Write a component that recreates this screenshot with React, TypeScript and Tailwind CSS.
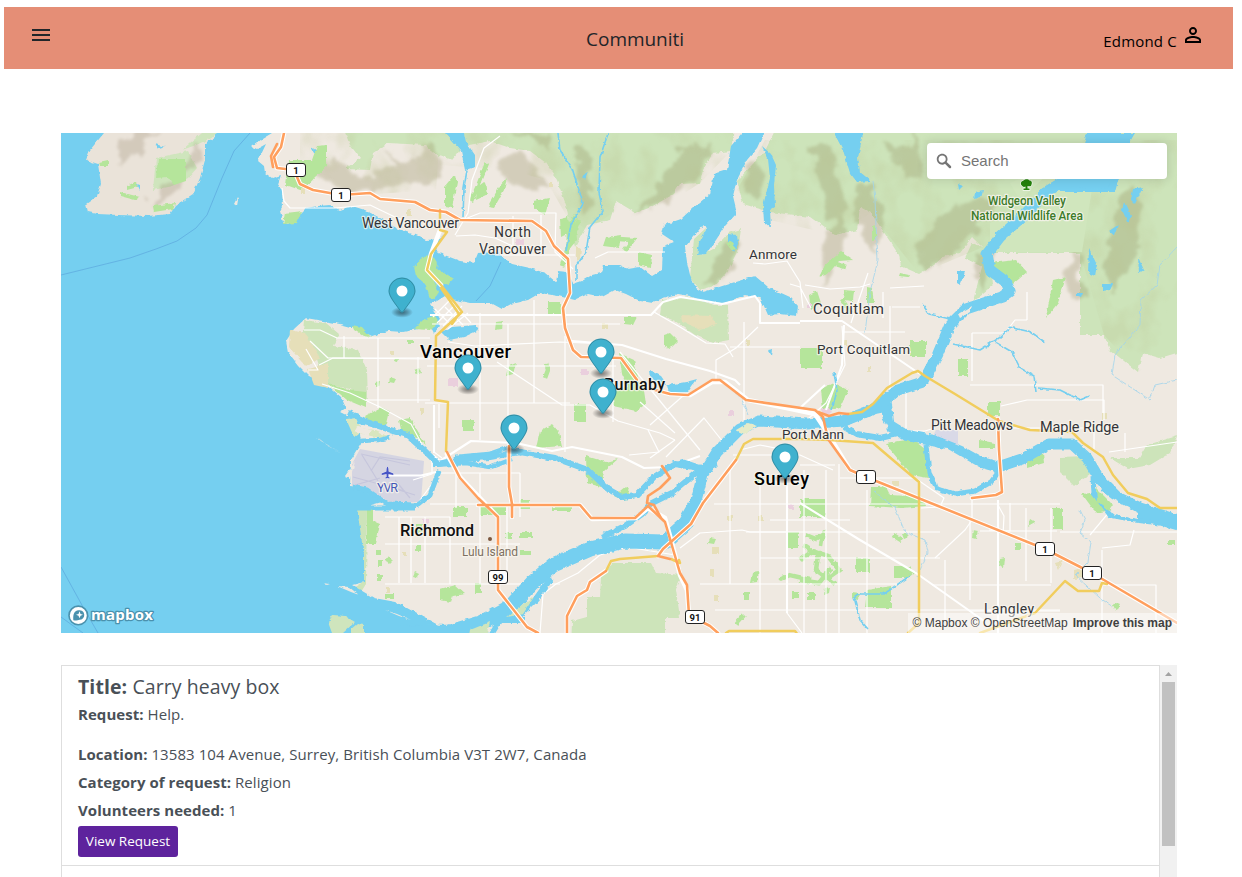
import React from "react";
import { MdMenu, MdPersonOutline } from "react-icons/md";

const coast =
  "M50 120H272V133L262 139 252 147 257 149 266 144 258 161 264 166 265 173 272 178 281 175 278 184 282 191 283 205 280 211 283 222 288 224 298 216 306 208 318 206 330 205 340 210 352 206 365 210 382 219 398 229 415 235 426 240 440 239 444 233 437 246 436 252 447 256 460 261 474 263 478 253 497 252 512 264 530 268 545 273 556 282 558 271 567 272 573 284 582 281 592 275 600 273 604 265 620 265 628 269 640 267 652 276 662 270 663 246 674 242 662 234 664 225 681 219 693 208 710 194 714 174 727 170 731 146 742 133V120H770L764 133 757 148 747 160 737 180 733 196 737 213 725 226 716 240 706 254 697 255 699 243 707 228 703 225 690 241 685 247 687 262 690 275 696 288 703 292 716 288 735 282 755 276 768 287 790 297 798 306 797 316 780 314 768 315 760 297 745 295 725 303 705 302 690 296 678 294 663 298 652 303 640 301 626 294 615 290 602 297 588 294 575 300 558 296 540 293 528 300 511 304 502 309 491 303 470 303 455 300 445 296 437 301 430 304 435 311 440 320 431 320 418 329 403 332 388 331 372 336 355 328 340 324 323 321 306 318 294 329 286 341 288 352 298 365 309 376 326 384 341 397 346 408 340 412 352 418 372 425 385 430 359 424 361 444 351 460 350 486 367 488 382 502 357 509 361 535 364 555 364 582 352 585 374 598 396 602 418 614 440 626 440 650H50Z";

const island =
  "M104 120 104 133 90 150 86 160 98 164 101 184 97 196 86 204 88 212 98 214 119 215 148 216 170 214 176 205 193 194 200 178 205 160 205 143 215 137 214 120Z";

const hills = [
  "M444 120H735L731 151 713 153 703 170 700 183 680 184 674 194 651 207 636 213 616 201 610 220 587 225 575 247 571 232 566 205 557 180 546 163 530 151 510 148 490 141 464 146 452 160 440 155Z",
  "M340 120H445L440 158 425 145 388 143 373 153 370 170 345 169 360 158 350 145Z",
  "M765 151 780 120H1190V349L1160 358 1142 353 1138 372 1110 350 1104 335H1080V253H988L972 237 960 253 943 257 934 265 919 274 901 266 899 255 871 213 860 207 857 230 835 235 810 217 770 212 743 204 737 181Z",
  "M694 239 706 228 702 255 715 248 728 233 741 229 738 250 727 272 714 286 700 290 690 277Z",
  "M651 563 613 563 601 577 600 597 587 597 587 617 572 621 571 650H665V618H680L676 589 683 575 656 573Z",
  "M662 300 690 297 714 305 728 305 729 340 713 343 695 335 675 321 660 315Z",
  "M304 320 326 323 339 334 334 346 358 350 367 370 368 400 350 389 325 384 314 350 302 342Z",
  "M972 243 990 250 993 285 973 301 982 267 965 258Z",
  "M1060 457 1086 456 1090 474 1074 486 1060 472Z",
  "M1110 458 1139 458 1147 445 1177 436 1170 453 1150 465 1128 469Z",
  "M354 510 367 510 366 584 361 592 351 589 363 582Z",
];

const shade = [
  "M118 145 145 133H162L143 150 121 165 111 161Z",
  "M180 151 198 140 202 158 185 169 172 165Z",
  "M300 166 335 162 364 177 395 166 415 174 393 190 351 194 332 184Z",
  "M385 150 404 161 430 144 442 155 435 180 405 183Z",
  "M497 161 523 152 552 188 529 192 503 178Z",
  "M580 141 592 160 594 190 584 215 576 190Z",
  "M505 133 550 133 548 150 530 140Z",
  "M680 150 711 141 715 154 697 172 682 187 666 203 632 215 651 195Z",
  "M835 218 848 225 842 253 826 282 821 266Z",
  "M808 141 832 151 845 209 833 230 825 194Z",
  "M857 187 873 184 885 227 874 253 854 213Z",
  "M941 214 983 197 1000 202 980 231 940 263 921 268 916 248Z",
  "M973 255 992 249 991 276 981 292 976 275Z",
  "M1062 276 1080 251 1084 299 1071 291Z",
  "M1118 202 1133 185 1143 215 1136 252 1121 276 1111 294 1105 263Z",
  "M719 254 737 238 735 270 714 285 701 288Z",
  "M885 140 908 150 915 133 925 180 905 175Z",
  "M744 165 762 160 760 195 745 190Z",
];

const greens = [
  "M289 160h23l5-14 10-1v21l-11 10-13 15-17-6z", "M158 159h28v22l-12 4-6-8-12 1z",
  "M445 187l9-11 3 5-5 27-7-1z", "M488 207l11-20 8-9-3 12-10 18z", "M477 188l8-6 2 13-11 5z",
  "M533 201l17-3-5 17-12-7z", "M560 219l8-2 3 15-10 5z", "M567 225l8-11 2 26-11 13z",
  "M606 237l15-2-2 13-16-2z", "M638 252l14 3-1 13-13-3z", "M548 302h13v12h-13z",
  "M414 267l8-10 11-1 5 8-4 17 5 12-4 6-5-1-5-14-9-8z", "M285 213l17-2-5 12-14 1z", "M430 264l8 5 15 10-5 6-12-4z",
  "M352 325l10 2 9 10-8-1-9-6z", "M414 329l10-10 10 3-4 8z", "M327 383l21 7 18 2v16l-19-8z", "M427 318l8-2 4 6-8 8z",
  "M365 416l16-9 8 4-4 17-14-4z", "M399 420l11-2 16 27-9-7-15-4z", "M462 420h12v11h-12z",
  "M536 448l4-17 12-7 7 8 3 14z", "M586 456l20 6 12-3-14 12-3 16-14-4z", "M614 390l29-6 3 20-10 7-23-5z",
  "M574 404h12v18h-12z", "M619 353l15 7 6 25-11 7-7-18z", "M614 496l12-10 8 12-11 2z",
  "M885 443l27-4 13 10 3 29-17-3z", "M990 263l26-3 11 12-14 12z", "M1053 280l13-3-8 26-12 15z",
  "M1027 452l15-9 2 20-17 5z", "M800 499h25v18h-25z", "M988 402h12v14h-12zM979 440l16 3v5h-16z",
  "M871 487h15l4 8 33 2 3 9-25 2-31-2z", "M856 558h14v14h-14z", "M867 590l24-4v22h-26z",
  "M894 566h15l6 7-6 5h-15z", "M1053 508h10v21h-10z", "M1082 494l15-2 8 19-9 2z",
  "M453 507h14v9h-14z", "M480 506h26v9h-26z", "M520 500h10v9h-10z", "M551 507h20v4h-20z",
  "M505 533h7v6h-7z", "M520 532h12v6h-12z", "M520 551h11v4h-11z", "M800 348h22v20h-22z",
  "M821 389l12-6 15 7-8 18-17 3z", "M910 341h16v15h-16z", "M958 359h10v17h-10z",
  "M825 265l16-13 12 8-14 1-11 13-9 3z", "M872 226l4-1v14l-4 1z", "M900 273l9 2-1 2-9-1z",
  "M844 290l10 1-1 10-10-1z", "M867 287l5 1 2 15h-7z", "M809 295l8-4 4 12-10 7z",
  "M664 335l6-2 8 8-8 8-6-3z", "M624 317h13l-4 8-9-1z", "M440 589l15-4 10 9-12 2-2 6-11-2z",
  "M787 532h11v16h-11z", "M367 509h6v12l7 3-4 20h-9z", "M376 550h5v5h-5z", "M378 560h4v7h-4z", "M385 594h9v5h-9z",
  "M496 322l7-1-1 8-7 1zM509 366l7-3-3 11-6 2zM407 340h6v4h-6zM395 358l4 1-1 4-4-1zM414 370l5-2 2 5-5 2zM390 377l6 2-2 4-5-1zM375 382l5-1-1 6-4 1z",
  "M755 477h8v6h-8zM752 573l7-1-2 10-7 1zM744 592h5v8h-5zM808 593h7v7h-7zM825 588l5-1-1 6-5 2zM852 592l8 1-1 6-7-1zM902 534l5-2 2 5-5 2zM1000 559l5-1-1 10-5-2zM973 530l5 1-2 8-4-1zM1015 543h6v7h-6zM1030 519l5 3-7 4zM1115 602l5 2-4 7-3-6zM1168 540h7v5h-7z",
  "M416 524h7v8h-7zM416 545h5v6h-5zM377 574h5v7h-5zM389 556l4 4-4 4-4-3zM415 572l4 2-2 4-4-1zM475 583h6v10h-6zM710 538l6 1-2 5-6-1zM792 592h7v6h-7z",
];

const wiggles = [
  "M487 163 478 186 471 201", "M579 220 569 244 562 266", "M619 239 633 240 625 251",
  "M829 262 846 267", "M842 300 851 313", "M800 560 813 551 828 556 839 570 825 580",
  "M803 545 818 555 816 570 835 584", "M800 580 819 583 831 568", "M779 580 790 575 811 580", "M546 363 548 370 545 378",
  "M806 535 816 539 823 534 821 546", "M728 242 734 250", "M893 535 901 540", "M736 624 744 615",
];

const whiteRoads = [
  "M304 330 320 330 337 338H430", "M310 341 328 358H430", "M319 365 333 358 430 359", "M306 349 318 370 308 370",
  "M322 384 350 393 380 407 411 424 425 450", "M366 400H430", "M344 336V358", "M378 338V408", "M418 357V403",
  "M432 324H620", "M448 342 475 346 560 342 610 344",
  "M427 366H616", "M425 403H570", "M439 404V428M480 313V440M508 324V440M534 300V403M565 336V452M613 350V422",
  "M654 312 680 327 706 343 725 344 733 357", "M497 362 562 405 590 405 618 421 660 433 675 440",
  "M640 402 675 433M648 430 659 452 629 455M666 457 704 418 727 447M650 425 684 395", "M675 440 650 458",
  "M432 460V474L413 480", "M415 507 440 473H520",
  "M434 405V452L442 458", "M385 517H450M385 544H520M385 584H560M399 517V583M411 517V583M425 517V583M450 517V584M480 473V584",
  "M456 456V508M507 505V584M520 473V517M430 504H520", "M540 633 543 594 556 584 578 573 600 555 627 547 675 555",
  "M282 188 284 201 290 208H335L370 205 397 218 430 228", "M456 236 475 235 495 238 517 248 540 246", "M440 229 480 213 556 213 555 252 573 269",
  "M455 235 468 213 472 180 484 148 500 136", "M513 216V251M541 215V253", "M495 255 575 255M595 258 608 252 665 252",
  "M744 322V420", "M730 347H800M758 327 736 348 716 360V384",
  "M753 263 765 264 787 261 800 282 803 308M790 284 800 287 811 308",
  "M842 326 845 365 826 403 800 426", "M805 285 830 289 860 287 870 284M868 273 851 323M890 288 924 286",
  "M890 306 890 390M842 332H905M883 292V318M892 307 920 307", "M972 333V381M972 333H1005L1015 320H1027M1027 292V320",
  "M906 388V431H925M925 431 935 428", "M970 385H1103V413", "M1001 406 1027 400 1104 400V420", "M1010 428H1110M1094 428V451M1125 452V433",
  "M733 455H800L833 470M730 470V584M740 450 760 445 795 452", "M760 473V633M787 475V613L802 633M804 470V633M826 470V633M839 464V633M867 490V633",
  "M714 504H1060M746 532H940M760 558H940M700 584H900M715 610H1060M770 520H850",
  "M800 465H835M840 478H915L944 498 940 507 921 508", "M972 498V520L965 530 935 558",
  "M998 505 1004 516 1003 535M1010 503V531L989 530", "M1026 508V581M1051 508V583M970 611H1060M980 531H1057",
  "M945 560V620M970 520V600M932 585H1051M1060 532H1177M1103 585H1156V633M1102 550V633M1102 548 1130 545 1134 530",
  "M680 548 700 533 742 530 750 532 788 532", "M620 352 700 450", "M1109 452 1177 442M1090 535 1115 505",
  "M433 317 450 300M437 323 456 304M443 326 462 306M448 329 468 313M445 307 463 325M452 302 471 323M435 309 450 324",
];

const minorWater = [
  "M557 125 560 150 572 168 583 203 571 224 566 251", "M611 125 600 157 599 193 603 211 590 227 586 252 576 266 576 281",
  "M467 170 464 188 463 217", "M923 305 929 314 950 319",
  "M953 344 980 350 999 338 1010 328", "M1009 327 1031 332 1046 343", "M995 342 1012 352 1020 368 1034 376 1036 392",
  "M834 372 837 391 832 410", "M911 575 884 594 858 594 854 597 860 620 868 629",
  "M1038 388 1060 390 1080 400 1090 396",
];
const faintWater = [
  "M873 181 875 200 876 225 878 260 870 292 865 333", "M1177 247 1160 265 1157 285 1141 300 1140 325 1115 355 1112 375 1150 400 1155 385 1177 380",
  "M1080 510 1085 520 1080 533 1091 542 1088 562 1075 575 1100 598 1113 607", "M875 492 895 508 905 532 925 540 928 552 917 577", "M730 385 742 400 748 415",
];

const pink = ["M516 239h8v6h-8z", "M448 378h10v8h-10z", "M581 369h7v6h-7z", "M728 411h6v5h-6z", "M821 410l7-3 4 5-6 4z", "M788 505h6v4h-6z", "M423 519h6v5h-6z", "M807 303h5v5h-5z"];
const tan = ["M301 188h4v6h-4z", "M407 209h4v7h-4z", "M290 330l15 3 15 25-14 9-17-20z", "M308 369l20-6v25l-14-3z", "M681 315l30 1 5 8-16 6-18-9z", "M602 323h6v6h-6z", "M576 246l5 3-1 10-4 3z", "M420 408h4v6h-4z", "M390 351h4v4h-4z", "M549 183h4v4h-4z", "M758 516h5v5h-5z", "M711 547h8v7h-8z", "M710 570h4v6h-4z", "M892 481h7v5h-7z", "M1074 570l9-2v10l-9 1z", "M1056 562l7-2-5 10z", "M956 422h6v5h-6z", "M1102 413h5v6h-5z", "M386 588h4v5h-4z", "M403 552h4v4h-4z", "M714 596h4v5h-4z", "M727 516h5v5h-5z", "M844 340h4v5h-4z", "M867 367h4v5h-4z", "M746 340h4v5h-4z"];

type Label = { t: string; x: number; y: number; w: number; s: number; weight?: number; fill?: string };
const labels: Label[] = [
  { t: "West Vancouver", x: 362, y: 228, w: 97, s: 14 },
  { t: "North", x: 494, y: 237, w: 37, s: 14 },
  { t: "Vancouver", x: 479, y: 254, w: 67, s: 14 },
  { t: "Anmore", x: 749, y: 259, w: 48, s: 13.5 },
  { t: "Coquitlam", x: 813, y: 314, w: 71, s: 15 },
  { t: "Port Coquitlam", x: 817, y: 354, w: 93, s: 13.5 },
  { t: "Pitt Meadows", x: 931, y: 430, w: 82, s: 14 },
  { t: "Maple Ridge", x: 1040, y: 432, w: 79, s: 14.5 },
  { t: "Port Mann", x: 782, y: 439, w: 62, s: 13.5 },
  { t: "Langley", x: 984, y: 614, w: 50, s: 14 },
  { t: "Vancouver", x: 420, y: 358, w: 91, s: 18.5, weight: 500, fill: "#000" },
  { t: "Burnaby", x: 604, y: 390, w: 61, s: 16, weight: 500, fill: "#111" },
  { t: "Surrey", x: 754, y: 485, w: 55, s: 18, weight: 500, fill: "#000" },
  { t: "Richmond", x: 400, y: 536, w: 74, s: 16.5, weight: 500, fill: "#111" },
  { t: "YVR", x: 377, y: 492, w: 21, s: 12.5, fill: "#4558b8" },
  { t: "Lulu Island", x: 462, y: 556, w: 56, s: 12, fill: "#7d7061" },
  { t: "Widgeon Valley", x: 988, y: 205, w: 78, s: 12, weight: 500, fill: "#3c7b2a" },
  { t: "National Wildlife Area", x: 971, y: 220, w: 112, s: 12, weight: 500, fill: "#3c7b2a" },
];
const shields: [number, number, string][] = [[296, 170, "1"], [341, 195, "1"], [498, 577, "99"], [695, 617, "91"], [866, 477, "1"], [1045, 549, "1"], [1092, 573, "1"]];
const markers: [number, number][] = [[402, 291], [468, 368], [601, 352], [603, 392], [514, 428], [785, 457]];

function MapCanvas() {
  return (
    <svg className="block h-full w-full" viewBox="61 133 1116 500" fontFamily="Roboto, sans-serif">
      <defs>
        <filter id="rough" filterUnits="userSpaceOnUse" x="50" y="120" width="1140" height="530">
          <feTurbulence type="fractalNoise" baseFrequency="0.2" numOctaves="2" seed="4" />
          <feDisplacementMap in="SourceGraphic" scale="3.6" xChannelSelector="R" yChannelSelector="G" />
        </filter>
        <filter id="soft" filterUnits="userSpaceOnUse" x="50" y="120" width="1140" height="530">
          <feTurbulence type="fractalNoise" baseFrequency="0.06" numOctaves="3" seed="8" />
          <feDisplacementMap in="SourceGraphic" scale="20" xChannelSelector="R" yChannelSelector="G" />
          <feGaussianBlur stdDeviation="1.6" />
        </filter>
        <filter id="relief" filterUnits="userSpaceOnUse" x="50" y="120" width="1140" height="530">
          <feTurbulence type="fractalNoise" baseFrequency="0.032 0.026" numOctaves="3" seed="12" result="n" />
          <feColorMatrix in="n" type="matrix" values="0 0 0 0 .5  0 0 0 0 .54  0 0 0 0 .28  3.2 0 0 0 -1.4" result="c" />
          <feComposite in="c" in2="SourceGraphic" operator="in" />
        </filter>
        <radialGradient id="pinShadow">
          <stop offset="0" stopColor="#000" stopOpacity=".5" />
          <stop offset=".5" stopColor="#000" stopOpacity=".28" />
          <stop offset="1" stopColor="#000" stopOpacity="0" />
        </radialGradient>
      </defs>
      <rect x="61" y="133" width="1116" height="500" fill="#efe9e1" />
      <g filter="url(#rough)">
        <g fill="#cde4ba">{hills.map((d) => <path key={d} d={d} />)}</g>
      </g>
      <g fill="#8c8657" opacity=".27" filter="url(#soft)">{shade.map((d) => <path key={d} d={d} />)}</g>
      <g filter="url(#relief)" opacity=".26">
        <path d="M435 133H735L731 151 700 183 674 200 616 211 587 230 566 215 546 180 510 170 440 165ZM765 140H1177V349L1138 372 1104 335 1080 253 988 245 919 274 871 213 835 235 770 220 737 190ZM300 133H440L436 190 360 195 300 160Z" />
      </g>
      <path d="M990 223 1050 189H1092L1082 252H990ZM1010 183 1040 170 1050 172 1020 200Z" fill="#d0e6bd" />
      <g filter="url(#rough)" fill="#75cff0">
        <path d={coast} />
        <path d="M445 120V133L461 151 465 170 475 167 475 155 466 142 461 120Z" />
        <path d="M762 146 771 154 776 165 774 185 775 207 770 210 771 228 764 222 763 206 770 178 768 159Z" />
        <path d="M728 234 737 235 738 244 734 252 728 245Z" />
        <path d="M835 120V135L843 150 850 173 857 182 871 181 860 172 858 158 863 133V120Z" />
        <path d="M1091 120V133H1135L1128 145 1115 192H1060L1058 181 1077 167Z" />
        <path d="M1089 248 1097 265 1095 276 1088 273ZM1138 257 1144 270 1139 273ZM957 271 965 272 960 285 957 283ZM1102 284 1113 284 1110 290 1102 291ZM1124 202 1131 216 1128 223 1122 210ZM1133 189 1143 187 1135 204 1131 200ZM1109 231 1118 225 1114 235ZM958 184 963 186 959 190ZM975 192 983 190 981 197 974 199ZM1076 293 1083 293 1081 298 1076 296ZM913 343 919 343 918 349 913 349ZM768 350 773 349 772 356Z" />
        <path d="M441 332 452 327 476 325 479 330 464 337 449 340ZM430 308 440 326 434 333 427 320ZM627 395 641 392 641 400 629 401ZM667 385 686 382 697 379 688 392 669 394ZM649 370 661 376 668 386 650 378Z" />
        <path d="M311 147 325 156 317 157ZM582 176 588 172 585 180Z" />
      </g>
      <g filter="url(#rough)">
        <path d={island} fill="#eae3d9" />
        <path d="M156 158 188 151 197 168 188 178 172 186 153 190ZM182 150 202 133H217L207 140 196 145Z" fill="#cfe5bd" />
        <path d="M234 204l3-6-1-2 2 4-1 6z" fill="#efe9e1" />
      </g>
      <g fill="#8c7b61" opacity=".24" filter="url(#soft)">
        <path d="M120 143 138 133H158L146 146 130 158 118 165ZM184 153 198 145 204 158 187 173 177 190 160 201 147 205 161 190 180 169Z" />
      </g>
      <g filter="url(#rough)" fill="#b5e59b">
        {greens.map((d) => <path key={d} d={d} />)}
        <path d="M153 206l22-3-2 6-19 3zM120 192l20 5-5 3-15-4zM127 186l10-5 1 6-11 3zM99 162l9-2v6h-8z" />
        <g fill="none" stroke="#b5e59b" strokeWidth="4.5">{wiggles.map((d) => <path key={d} d={d} />)}</g>
        <g fill="#e6dfb9">{tan.map((d) => <path key={d} d={d} />)}</g>
        <g fill="#eacfdd">{pink.map((d) => <path key={d} d={d} />)}</g>
        <path d="M328 622 333 615 345 616 355 622 343 633H332ZM351 629 357 624 364 625V640H351Z" fill="#cfe5bd" />
        <path d="M155 144 165 147 158 149ZM137 184 140 185 140 190Z" fill="#75cff0" />
      </g>
      <path d="M360 449 424 461 421 502 391 503 372 492 352 486V464Z" fill="#d5d5e2" />
      <path d="M361 454 410 465M362 455 378 481M353 477 405 491M371 471 380 457 410 461M386 486 415 495M355 485 380 478M395 480 410 498" fill="none" stroke="#c6c6dc" strokeWidth="1.2" />
      <path d="M936 430h22v15l-27-5z" fill="#d9d9e7" />
      <g fill="none" stroke="#fff" strokeWidth="1.2" strokeLinejoin="round">{whiteRoads.map((d) => <path key={d} d={d} />)}</g>
      <g fill="none" stroke="#fff" strokeWidth="2.1" strokeLinejoin="round">
        <path d="M434 405V453M433 455 440 461 471 441 516 443 552 451 572 447 622 457 644 468 670 467 700 456M430 315H651L663 302 680 297 700 300 722 304 755 296 760 303V323L800 323M572 341 622 345 666 359 710 371 735 380 740 385M800 321H842L920 374M787 475V613M998 500V633M800 503 860 540 916 573 984 621M826 410 842 365 844 325M800 408 825 385" />
      </g>
      <g filter="url(#rough)" fill="none" stroke="#75cff0" strokeLinejoin="round">
        <g strokeWidth=".8" stroke="#9fd4ec">{faintWater.map((d) => <path key={d} d={d} />)}</g>
        <path d="M685 525 695 504 703 474 717 452 740 429 759 421 807 424 843 421 872 410 898 390 923 382 937 356 950 325 966 309 1002 297 1010 291 1006 282 990 270 987 254 1000 237 1024 215 1046 192 1063 182 1110 183" strokeWidth="11" />
        <path d="M400 633 450 632 480 623 510 607 532 583 553 565 590 549 625 541 665 542 684 525 695 506" strokeWidth="15" />
        <path d="M348 413 367 422 390 430 407 435 425 451 438 464 462 459 490 457 520 452 555 458 588 470 608 489 622 497 637 495 654 477 674 464 700 468 717 464" strokeWidth="6" />
        <path d="M455 457 489 454 506 448 522 454M433 465 466 463 491 467 513 459M360 441 378 440 390 437M671 466 684 462 702 468" strokeWidth="4.5" />
        <path d="M352 487 367 490 387 504 418 505 430 495 439 471M354 508H415" strokeWidth="5" />
        <path d="M602 537 625 526 642 514 652 503 672 493 690 478 706 464" strokeWidth="6" />
        <path d="M886 401 889 425 905 435 935 441 960 451 980 462 998 467 1022 459 1049 444 1072 444 1087 458 1100 480 1117 497 1140 508 1177 520H1190" strokeWidth="11" />
        <path d="M1120 502 1145 514 1177 523H1190" strokeWidth="14" />
        <path d="M926 445 929 473 937 488 955 494 975 491 991 482 1000 470M1093 477 1094 493 1110 515 1135 520 1160 523" strokeWidth="5" />
        <path d="M844 424 856 418 875 411 889 408M480 620 516 618 536 599 551 578M490 636 500 620 525 620" strokeWidth="6" />
        <path d="M844 427 856 434 880 438 898 434" strokeWidth="6" />
        <g strokeWidth="1.6">{minorWater.map((d) => <path key={d} d={d} />)}</g>
      </g>
      <g filter="url(#rough)" fill="#efe9e1">
        <path d="M852 428 862 419 874 416 882 418 888 428 884 432 866 432ZM929 447 948 449 972 463 990 473 989 479 978 486 950 490 937 486 932 470Z" />
        <path d="M958 314 972 306 970 312 960 318ZM1098 488 1112 498 1138 513 1138 519 1115 515 1097 500Z" />
        <path d="M736 430 748 423 758 426 744 434Z" fill="#e6ebc8" />
        <path d="M507 617 523 604 534 597 523 614ZM470 630 490 622 485 640H468Z" fill="#cfe5bd" />
        <path d="M1096 488 1113 505 1109 511 1097 501Z" fill="#b5e59b" />
        <path d="M317 437l10 8 15 8-9-5-12-7zM324 583l6 1-3 1zM337 586l12 1 10 8-8-3zM385 610l12 4 14 6-12-4zM355 462l-10 14 5 2z" />
        <path d="M346 419l10-1 4 10 15 2 12 6-8 2-20-5-5 4z" fill="#d9e6bf" />
        <path d="M357 427 372 430 368 436 355 431Z" />
      </g>
      <g fill="none" stroke="#589fda" strokeWidth=".9" opacity=".65">
        <path d="M61 275 130 258 156 249 177 241 196 228 207 215 222 178 234 151 250 133M61 567 83 607 98 633M61 617 83 633M501 262 490 286 476 301" />
      </g>
      <g fill="none" strokeLinejoin="round" strokeLinecap="round">
        <g stroke="#fff" strokeWidth="4.6">
          <path d="M284 133 281 147 274 157 277 168 294 170 300 184 313 190 341 195 370 193 380 199 415 202 430 210 446 212 460 220 532 221 546 231 554 246 568 259 570 293 563 308 565 328 573 350 581 357 621 358 637 380" />
          <path d="M655 390 670 394 690 395 712 382 725 382 748 400 815 414 825 429 850 470 866 477 1045 549 1092 573 1177 623" />
          <path d="M447 454 460 477 498 517V590L527 627 538 633M478 505 580 505 592 519 636 518 648 508 665 518 672 543 680 575 687 590 689 615 710 626 718 633" />
          <path d="M440 230 431 254 427 270 441 285M509 446V487L512 504V517M567 633V616L577 596 587 590 590 582 606 571M658 556 663 549 691 524 703 503 736 460M998 419 999 450 1002 492 996 495 972 498" />
        </g>
        <g stroke="#f1cd5d" strokeWidth="2.5">
          <path d="M440 210V230L447 232 431 254 427 270 441 285 462 312 436 336 435 400 448 402 446 451M441 288 459 314 452 324" />
          <path d="M848 414 862 412 873 404 887 388 912 373 918 371 925 376 955 394 999 421 1030 430 1072 432 1083 443 1103 457 1113 475 1128 493 1147 499 1160 508H1177" />
          <path d="M606 571 611 561 620 559 658 556M736 460 744 444 753 439H800L830 440 873 443 900 466 919 482V623L908 633M671 559 680 563 679 560M726 633 729 631H795L798 635M980 633 1035 613 1065 581 1078 591H1099L1102 583 1107 584" />
        </g>
        <g stroke="#ff9f5d" strokeWidth="2.6">
          <path d="M284 133 281 147 274 157 277 168 294 170 300 184 313 190 341 195 370 193 380 199 415 202 430 210 446 212 460 220 532 221 546 231 554 246 568 259 570 293 563 308 565 328 573 350 581 357 621 358 637 380" />
          <path d="M277 144 271 156 273 167M655 390 670 394 688 395 712 380 720 380 746 400 815 410 823 417 828 439 850 470 866 477 1045 549 1092 573 1177 623" />
          <path d="M818 412 829 416 839 413 848 414M447 452 460 478 478 498 498 517V590L527 627 538 633M509 446V487L512 504V517M478 505 580 505 591 518 635 518 648 506 665 522 680 573 687 585 689 615 710 626 718 633" />
          <path d="M662 466 670 478 660 488 648 496 647 503 654 505 661 518M567 633V616L577 596 587 590 590 582 606 571M658 556 663 549 691 524 703 503 736 460M658 556 670 559M998 419 999 450 1002 492 996 495 972 498" />
        </g>
      </g>
      {shields.map(([x, y, n]) => (
        <g key={`${x}-${y}`}>
          <rect x={x - 9.5} y={y - 6.5} width="19" height="13" rx="2.5" fill="#fff" stroke="#222" strokeWidth="1" />
          <text x={x} y={y + 3.5} textAnchor="middle" fontSize="9.5" fontWeight="700" fill="#111">{n}</text>
        </g>
      ))}
      <path d="M388 475.5 421 475.5 436 472" fill="none" stroke="#fff" strokeWidth="1.8" />
      <path transform="translate(387.5 472.5)" fill="#4654c5" stroke="#e8e8f4" strokeWidth=".8" style={{ paintOrder: "stroke" }} d="M0-6C1-5 1-3 1-1L5.8 1V2.5L1 1.5.8 4.2 2 5V6L0 5.5-2 6V5L-.8 4.2-1 1.5-5.8 2.5V1L-1-1C-1-3-1-5 0-6Z" />
      <circle cx="490" cy="539" r="2" fill="#7b573e" />
      <path transform="translate(1026.5 184.5)" fill="#23820b" stroke="#fff" strokeOpacity=".8" strokeWidth="1.5" style={{ paintOrder: "stroke" }} d="M-5.5 0C-6-3-4-3.5-3-4-1-6 2-5.5 3-4 5-4 6-2 5 0 5 2 3 2 1 1.5V4H3V5.5H-3V4H-1V2C-3 3-4 2-5.5 0Z" />
      <g strokeOpacity=".8" strokeWidth="2.4" strokeLinejoin="round" style={{ paintOrder: "stroke" }}>
        {labels.map((l) => (
          <text key={l.t + l.x} x={l.x} y={l.y} fontSize={l.s} fontWeight={l.weight ?? 400} textLength={l.w} fill={l.fill ?? "#333438"} stroke="#f8f5ee">{l.t}</text>
        ))}
      </g>
      {markers.map(([x, y]) => (
        <g key={`${x},${y}`} transform={`translate(${x - 13.5} ${y - 13.5})`}>
          <ellipse cx="13.5" cy="34.8" rx="11" ry="5.5" fill="url(#pinShadow)" />
          <path d="M27 13.5C27 19.07 20.25 27 14.75 34.5c-.73 1-1.77 1-2.5 0C6.75 27 0 19.22 0 13.5a13.5 13.5 0 0 1 27 0Z" fill="#3fb1ce" />
          <path d="M26.5 13.5C26.5 18.8 20 26.5 14.4 34.2c-.5.7-1.3.7-1.8 0C7 26.5.5 19 .5 13.5a13 13 0 0 1 26 0Z" fill="none" stroke="#000" strokeOpacity=".2" />
          <circle cx="13.5" cy="13.5" r="5.5" fill="#fff" />
        </g>
      ))}
      <g>
        <circle cx="78.3" cy="615.4" r="9.3" fill="#fff" stroke="#4a91ad" strokeWidth="1.6" />
        <path d="M73.3 620.2C73 614 74 611 78.5 610.3A4.8 4.8 0 1 1 79.5 619.8C77.5 620.6 75.5 620.5 73.3 620.2Z" fill="#4a91ad" />
        <path d="M79.5 611.2 80.5 613.9 83 614.8 80.5 615.8 79.5 618.3 78.5 615.8 76 614.8 78.5 613.9Z" fill="#fff" />
        <text x="91" y="620" textLength="62" fontFamily="Open Sans, sans-serif" fontSize="15" fontWeight="700" fill="#fff" stroke="#4a91ad" strokeWidth="2.5" strokeLinejoin="round" style={{ paintOrder: "stroke" }}>mapbox</text>
      </g>
    </svg>
  );
}

function Detail({ label, children, className = "" }: { label: string; children: React.ReactNode; className?: string }) {
  return (
    <p className={`h-7 whitespace-nowrap leading-7 ${className}`}>
      <b className="font-bold tracking-[0.05px]">{label}</b> <span className="tracking-[0.08px]">{children}</span>
    </p>
  );
}

export default function App() {
  return (
    <div className="h-[877px] overflow-hidden bg-white pt-[7px] font-['Open_Sans',sans-serif] text-[#495057]">
      <header className="ml-1 flex h-[62px] w-[1229px] justify-between bg-[#e58e76] pt-4 text-[#212529]">
        <div className="flex w-[333px] pl-[25px]"><MdMenu size={24} /></div>
        <h1 className="text-[19px] leading-8 tracking-[-0.05px]">Communiti</h1>
        <div className="flex w-[300px] justify-end pr-7 text-black">
          <span className="mr-1 pt-[6px] text-[15px] leading-6 tracking-[0.2px]">Edmond C</span>
          <MdPersonOutline size={24} />
        </div>
      </header>
      <main className="mt-16 ml-[61px] w-[1116px]">
        <section className="relative h-[500px] overflow-hidden">
          <MapCanvas />
          <label className="absolute top-[10px] right-[10px] flex h-9 w-60 items-center rounded bg-white pl-[7px] shadow-[0_0_10px_2px_rgba(0,0,0,0.1)]">
            <svg className="h-5 w-5 fill-[#757575]" viewBox="0 0 18 18"><path d="M7.4 2.5c-2.7 0-4.9 2.2-4.9 4.9s2.2 4.9 4.9 4.9c1 0 1.8-.2 2.5-.8l3.7 3.7c.2.2.4.3.8.3.7 0 1.1-.4 1.1-1.1 0-.3-.1-.5-.3-.8L11.4 10c.4-.8.8-1.6.8-2.5.1-2.8-2.1-5-4.8-5zm0 1.6c1.8 0 3.2 1.4 3.2 3.2s-1.4 3.2-3.2 3.2-3.3-1.3-3.3-3.1 1.4-3.3 3.3-3.3z" /></svg>
            <input className="mt-[1px] ml-[7px] w-48 bg-transparent font-['Liberation_Sans',sans-serif] text-[15px] outline-none placeholder:text-[#757575]" placeholder="Search" />
          </label>
          <div className="absolute right-0 bottom-0 flex h-5 items-center gap-[5px] bg-white/50 px-[5px] font-['Liberation_Sans',sans-serif] text-[12px] whitespace-nowrap text-[#404040]">
            <span>© Mapbox © OpenStreetMap</span><b>Improve this map</b>
          </div>
        </section>
        <section className="mt-8 flex h-[212px]">
          <div className="w-[1099px] border border-b-0 border-[#dedede] text-[15px]">
            <article className="h-[200px] border-b border-[#dedede] px-4 pt-[7px]">
              <h2 className="h-[27px] text-[19.5px] leading-7 font-medium tracking-[0.08px] whitespace-nowrap"><b className="font-bold">Title:</b> Carry heavy box</h2>
              <Detail label="Request:">Help.</Detail>
              <Detail label="Location:" className="mt-3">13583 104 Avenue, Surrey, British Columbia V3T 2W7, Canada</Detail>
              <Detail label="Category of request:">Religion</Detail>
              <Detail label="Volunteers needed:">1</Detail>
              <button className="mt-[2px] h-[31px] w-[100px] rounded-[3px] bg-[#5e239d] text-[13.5px] whitespace-nowrap text-white">View Request</button>
            </article>
          </div>
          <div className="flex w-[17px] flex-col items-center bg-[#f1f1f1]">
            <svg className="h-[17px] w-[17px]" viewBox="0 0 17 17"><path d="M5 11 8.5 7 12 11Z" fill="#a3a3a3" /></svg>
            <div className="h-[164px] w-[13px] bg-[#c1c1c1]" />
          </div>
        </section>
      </main>
    </div>
  );
}
